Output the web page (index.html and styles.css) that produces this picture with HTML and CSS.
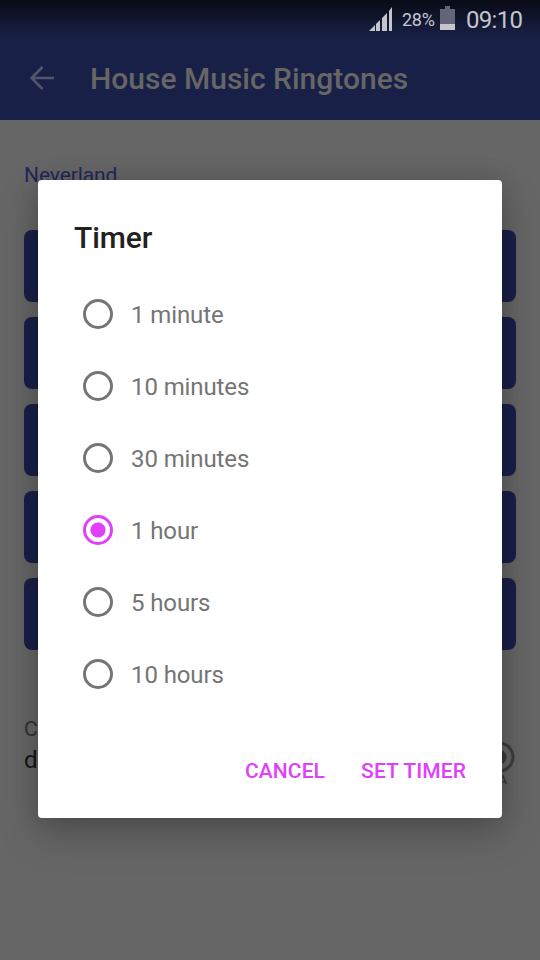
FILE: index.html
```html
<!DOCTYPE html>
<html lang="en">
<head>
<meta charset="utf-8">
<title>House Music Ringtones</title>
<link rel="stylesheet" href="styles.css">
</head>
<body>
<div class="screen">
  <header class="header">
    <div class="status">
      <svg class="signal" width="24" height="24" viewBox="0 0 24 24"><path d="M0 24L6 18V24ZM7 17L11 13V24H7ZM13 11L18 6V24H13ZM20 4L23 0V24H20Z"/></svg>
      <span class="percent">28%</span>
      <svg class="battery" width="15" height="24" viewBox="0 0 15 24"><path class="empty" d="M5 0H10V3H15V18H0V3H5Z"/><path d="M0 18H15V24H0Z"/></svg>
      <span class="clock">09:10</span>
    </div>
    <div class="toolbar">
      <svg class="back" width="24" height="24" viewBox="0 0 24 24"><path d="M24 12H2M12.5 1L1.5 12L12.5 23"/></svg>
      <h1 class="title">House Music Ringtones</h1>
    </div>
  </header>
  <main class="content">
    <div class="track">Neverland</div>
    <div class="actions">
      <div class="action"></div>
      <div class="action"></div>
      <div class="action"></div>
      <div class="action"></div>
      <div class="action"></div>
    </div>
    <div class="license">
      <div>
        <div class="caption">C</div>
        <div class="author">d</div>
      </div>
      <div class="badge">
        <svg width="32" height="32" viewBox="0 0 32 32"><circle cx="15" cy="16" r="14" class="ring"/><circle cx="15" cy="16" r="7.5" class="core"/></svg>
        <span class="badge-text">A</span>
      </div>
    </div>
  </main>
  <section class="dialog" role="dialog">
    <h2 class="dialog-title">Timer</h2>
    <div class="options">
      <label class="option"><span class="radio"></span>1 minute</label>
      <label class="option"><span class="radio"></span>10 minutes</label>
      <label class="option"><span class="radio"></span>30 minutes</label>
      <label class="option"><span class="radio checked"></span>1 hour</label>
      <label class="option"><span class="radio"></span>5 hours</label>
      <label class="option"><span class="radio"></span>10 hours</label>
    </div>
    <div class="buttons"><span>CANCEL</span><span>SET TIMER</span></div>
  </section>
</div>
</body>
</html>
```
FILE: styles.css
```css
* { box-sizing: border-box; }
body { margin: 0; font-family: Roboto, sans-serif; }
.screen { position: relative; width: 540px; height: 960px; overflow: hidden; background: #666; }
.header { height: 120px; background: linear-gradient(#090b16, #192046 38px, #192048 40px); }
.status { height: 38px; display: flex; justify-content: flex-end; align-items: center; padding-right: 17px; color: #c4c5cd; }
.status svg { fill: #c4c5cd; }
.percent { font-size: 18px; margin-left: 9px; width: 33px; margin-right: 5px; letter-spacing: -.3px; }
.battery { margin-top: -2px; }
.battery .empty { fill: #626575; }
.clock { font-size: 24px; line-height: 38px; width: 57px; margin: 2px 0 0 11px; letter-spacing: -.7px; white-space: nowrap; }
.toolbar { height: 80px; display: flex; align-items: center; padding-left: 30px; }
.back { fill: none; stroke: #53556a; stroke-width: 2.6; }
.title { margin: 2px 0 0 36px; font-size: 30px; line-height: 36px; font-weight: 500; color: #666; }
.content { padding: 42px 24px 0; }
.track { height: 68px; font-size: 21px; line-height: 26px; letter-spacing: -.1px; color: #1f285a; }
.actions { display: grid; gap: 15px; }
.action { height: 72px; border-radius: 8px; background: #192048; }
.license { display: flex; justify-content: space-between; margin-top: 66px; }
.caption { font-size: 21px; line-height: 26px; color: #303030; }
.author { font-size: 24px; line-height: 36px; color: #151515; }
.badge { width: 32px; padding-top: 25px; display: flex; flex-direction: column; }
.ring { fill: none; stroke: #3c3d40; stroke-width: 3; }
.core { fill: #38393c; }
.badge-text { align-self: flex-end; margin: 0 9px 0 0; font-size: 13px; line-height: 14px; font-weight: 500; color: #38393c; }
.dialog { position: absolute; left: 38px; top: 180px; width: 464px; height: 638px; padding: 36px 36px 0; border-radius: 4px; background: #fff; box-shadow: 0 16px 40px rgba(0, 0, 0, .22), 0 0 24px rgba(0, 0, 0, .14); }
.dialog-title { margin: 0; height: 63px; font-size: 30px; line-height: 44px; font-weight: 500; letter-spacing: -.1px; color: #212121; }
.options { padding-left: 9px; }
.option { display: flex; align-items: center; height: 72px; font-size: 24px; letter-spacing: -.1px; color: #757575; }
.radio { width: 30px; height: 30px; margin: 0 18px 2px 0; border: 3px solid #757575; border-radius: 50%; }
.checked { border-color: #e040fb; background: radial-gradient(circle, #e040fb 7px, transparent 8px); }
.buttons { display: flex; justify-content: flex-end; gap: 36px; padding-top: 45px; font-size: 21px; line-height: 30px; letter-spacing: .1px; font-weight: 500; color: #e040fb; }
```
